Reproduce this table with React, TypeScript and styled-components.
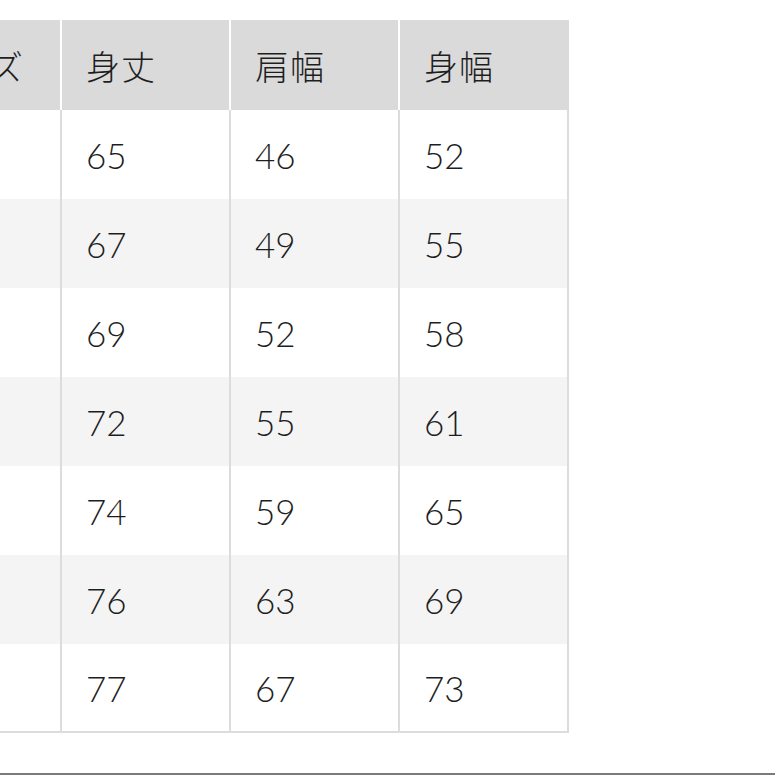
import React from 'react';
import styled, { createGlobalStyle } from 'styled-components';

const GlobalStyle = createGlobalStyle`
  html, body {
    margin: 0;
    padding: 0;
    background: #fff;
  }
  body {
    font-family: Lato, "Noto Sans CJK JP", sans-serif;
  }
`;

const Page = styled.div`
  width: 775px;
  height: 775px;
  display: flex;
  flex-direction: column;
  overflow: hidden;
  background: #fff;
`;

const TableArea = styled.div`
  flex: 1;
  padding-top: 20px;
  overflow: hidden;
`;

const BottomRule = styled.div`
  height: 2px;
  background: #7a7a7a;
`;

const SizeTable = styled.table`
  margin-left: -104px;
  border-collapse: separate;
  border-spacing: 0;
  table-layout: fixed;
  color: #1e1e1e;
`;

const HeadCell = styled.th`
  box-sizing: border-box;
  width: 169px;
  height: 90px;
  padding: 0 0 0 24px;
  background: #dadada;
  border-right: 2px solid #fff;
  text-align: left;
  font-family: "Noto Sans CJK JP", sans-serif;
  font-weight: 300;
  font-size: 34px;
  letter-spacing: 1px;
  white-space: nowrap;

  &:first-child {
    width: 166px;
  }

  &:last-child {
    border-right-color: #dadada;
  }
`;

const Row = styled.tr<{ $shaded: boolean }>`
  background: ${(p) => (p.$shaded ? '#f4f4f4' : '#fff')};

  &:last-child td {
    border-bottom: 2px solid #dcdcdc;
  }
`;

const Cell = styled.td`
  box-sizing: border-box;
  height: 89px;
  padding: 0 0 0 24px;
  border-right: 2px solid #dcdcdc;
  font-family: Lato, sans-serif;
  font-size: 35px;
  font-weight: 300;
  vertical-align: middle;
`;

const headers = ['サイズ', '身丈', '肩幅', '身幅'];

const rows = [
  ['XS', '65', '46', '52'],
  ['S', '67', '49', '55'],
  ['M', '69', '52', '58'],
  ['L', '72', '55', '61'],
  ['XL', '74', '59', '65'],
  ['XXL', '76', '63', '69'],
  ['3XL', '77', '67', '73'],
];

export default function App() {
  return (
    <Page>
      <GlobalStyle />
      <TableArea>
        <SizeTable>
          <thead>
            <tr>
              {headers.map((h) => (
                <HeadCell key={h}>{h}</HeadCell>
              ))}
            </tr>
          </thead>
          <tbody>
            {rows.map((r, i) => (
              <Row key={r[0]} $shaded={i % 2 === 1}>
                <Cell />
                {r.slice(1).map((v, j) => (
                  <Cell key={j}>{v}</Cell>
                ))}
              </Row>
            ))}
          </tbody>
        </SizeTable>
      </TableArea>
      <BottomRule />
    </Page>
  );
}
